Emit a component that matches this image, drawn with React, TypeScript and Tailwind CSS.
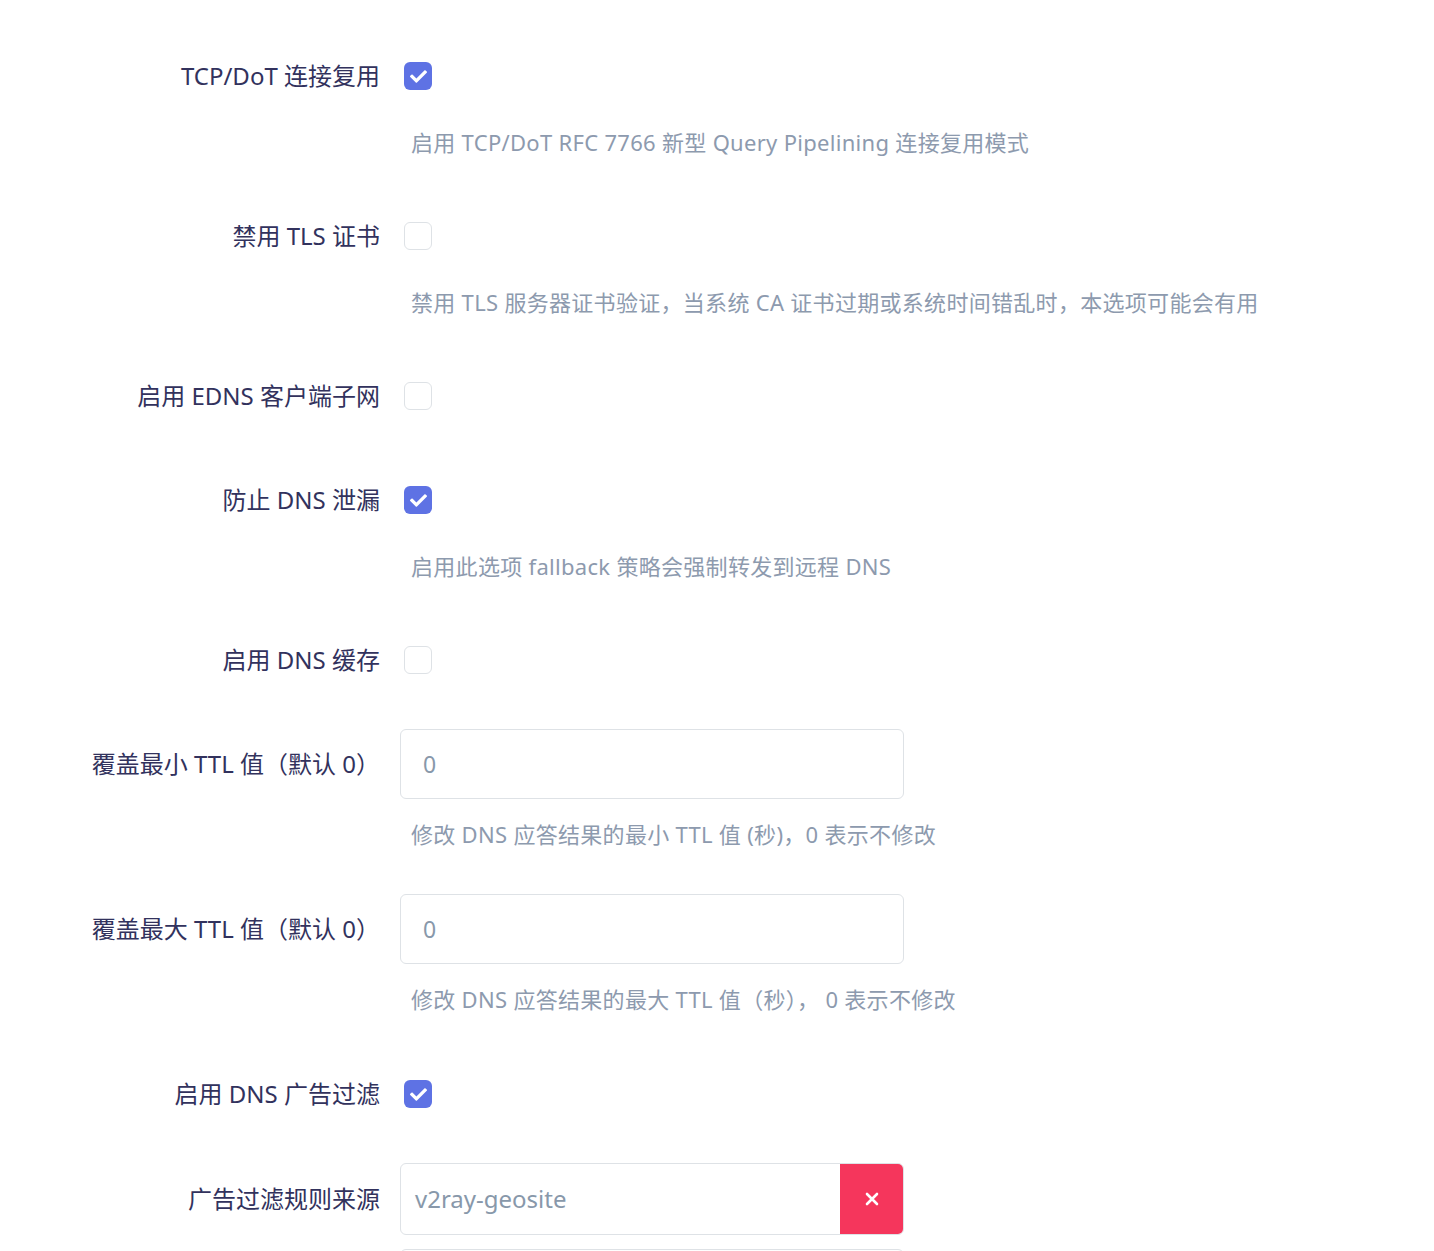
import React from 'react';

const Check = () => (
  <svg viewBox="0 0 512 512" className="w-[17px] h-[17px] fill-white">
    <path d="M173.9 439.4l-166.4-166.4c-10-10-10-26.2 0-36.2l36.2-36.2c10-10 26.2-10 36.2 0L192 312.7 432.1 72.6c10-10 26.2-10 36.2 0l36.2 36.2c10 10 10 26.2 0 36.2l-294.4 294.4c-10 10-26.2 10-36.2 0z" />
  </svg>
);

const Checkbox = ({ checked }: { checked: boolean }) => (
  <span
    className={
      checked
        ? 'ml-1 w-[28px] h-[28px] rounded-[6px] bg-[#5e72e4] flex items-center justify-center'
        : 'ml-1 w-[28px] h-[28px] rounded-[6px] bg-white border border-[#dee2e6]'
    }
  >
    {checked && <Check />}
  </span>
);

interface FieldProps {
  label: string;
  desc?: string;
  input?: boolean;
  children: React.ReactNode;
}

const Field = ({ label, desc, input, children }: FieldProps) => (
  <div className="grid grid-cols-[380px_1fr] gap-x-5 mb-[34px]">
    <div className="h-[70px] flex items-center justify-end text-[24px] text-[#32325d] whitespace-nowrap">
      {label}
    </div>
    <div>
      <div className="min-h-[70px] flex items-center">{children}</div>
      {desc && (
        <div
          className={
            input
              ? 'pt-[23px] pb-[14px] pl-[11px] text-[22px] leading-[24px] tracking-[0.3px] text-[#8d9aae] whitespace-nowrap'
              : 'pt-[19px] pb-[13px] pl-[11px] text-[22px] leading-[24px] tracking-[0.3px] text-[#8d9aae] whitespace-nowrap'
          }
        >
          {desc}
        </div>
      )}
    </div>
  </div>
);

const TextInput = ({ value }: { value: string }) => (
  <div className="w-[504px] h-[70px] border border-[#dee2e6] rounded-[6px] bg-white px-[22px] flex items-center text-[23px] text-[#8898aa]">
    {value}
  </div>
);

export default function App() {
  return (
    <div
      className="min-h-screen bg-white pt-[41px]"
      style={{ fontFamily: '"Noto Sans", "Noto Sans CJK SC", sans-serif' }}
    >
      <Field label="TCP/DoT 连接复用" desc="启用 TCP/DoT RFC 7766 新型 Query Pipelining 连接复用模式">
        <Checkbox checked />
      </Field>
      <Field label="禁用 TLS 证书" desc="禁用 TLS 服务器证书验证，当系统 CA 证书过期或系统时间错乱时，本选项可能会有用">
        <Checkbox checked={false} />
      </Field>
      <Field label="启用 EDNS 客户端子网">
        <Checkbox checked={false} />
      </Field>
      <Field label="防止 DNS 泄漏" desc="启用此选项 fallback 策略会强制转发到远程 DNS">
        <Checkbox checked />
      </Field>
      <Field label="启用 DNS 缓存">
        <Checkbox checked={false} />
      </Field>
      <Field label="覆盖最小 TTL 值（默认 0）" desc="修改 DNS 应答结果的最小 TTL 值 (秒)，0 表示不修改" input>
        <TextInput value="0" />
      </Field>
      <Field label="覆盖最大 TTL 值（默认 0）" desc="修改 DNS 应答结果的最大 TTL 值（秒）， 0 表示不修改" input>
        <TextInput value="0" />
      </Field>
      <Field label="启用 DNS 广告过滤">
        <Checkbox checked />
      </Field>
      <div className="grid grid-cols-[380px_1fr] gap-x-5 mb-[34px]">
        <div className="h-[72px] flex items-center justify-end text-[24px] text-[#32325d] whitespace-nowrap">
          广告过滤规则来源
        </div>
        <div className="flex flex-col gap-[14px]">
          <div className="w-[504px] h-[72px] border border-[#dee2e6] rounded-[6px] bg-white flex overflow-hidden">
            <div className="flex-1 px-[14px] flex items-center text-[24px] text-[#8898aa]">v2ray-geosite</div>
            <button className="w-[63px] bg-[#f5365c] flex items-center justify-center text-white">
              <svg viewBox="0 0 16 16" className="w-[16px] h-[16px]" stroke="white" strokeWidth="2.6" strokeLinecap="round">
                <path d="M3 3l10 10M13 3L3 13" />
              </svg>
            </button>
          </div>
          <div className="w-[504px] h-[72px] border border-[#dee2e6] rounded-[6px] bg-white" />
        </div>
      </div>
    </div>
  );
}
